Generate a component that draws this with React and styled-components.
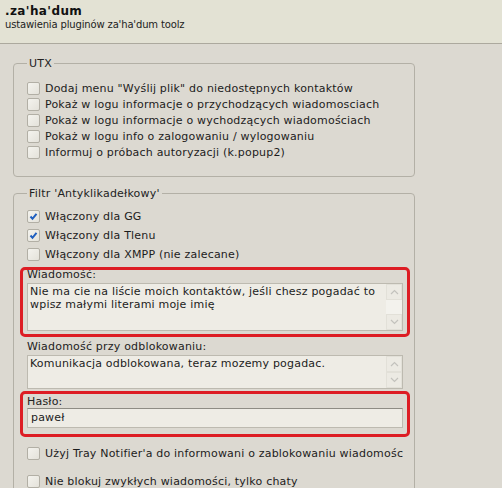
import React from "react";
import styled, { createGlobalStyle } from "styled-components";

const Global = createGlobalStyle`
  html, body { margin: 0; padding: 0; overflow: hidden; }
  body {
    background: #dcd9d1;
    font-family: "DejaVu Sans", Verdana, sans-serif;
    font-size: 11px;
    letter-spacing: 0.2px;
    color: #1c1c1c;
  }
`;

const Page = styled.div`
  width: 502px;
  height: 488px;
  overflow: hidden;
  background: #dcd9d1;
`;

const Header = styled.header`
  height: 38px;
  padding: 5px 5px 0;
  background: #e3e2d4;
  border-bottom: 1px solid #aca99e;
`;

const Title = styled.div`
  font-weight: bold;
  font-size: 12px;
  letter-spacing: 0.4px;
  line-height: 13px;
  color: #111;
`;

const Subtitle = styled.div`
  font-size: 10px;
  letter-spacing: -0.15px;
  line-height: 13px;
  color: #222;
`;

const Content = styled.main`
  padding: 13px 87px 0 13px;
`;

const Group = styled.fieldset`
  margin: ${(p) => (p.$first ? "0" : "10px 0 0")};
  padding: ${(p) => p.$pad};
  border: 1px solid #b3b0a6;
  border-radius: 4px;
  min-width: 0;
`;

const Legend = styled.legend`
  padding: 0 2px;
  line-height: 13px;
  color: #222;
`;

const CheckRow = styled.label`
  display: flex;
  align-items: center;
  gap: 5px;
  height: ${(p) => p.$h}px;
  margin-top: ${(p) => p.$mt || 0}px;
  white-space: nowrap;
  overflow: hidden;
`;

const Box = styled.span`
  flex: none;
  width: 11px;
  height: 11px;
  border: 1px solid #b2afa5;
  border-radius: 2px;
  background: linear-gradient(135deg, #f4f3ee 0%, #e4e2da 100%);
  display: flex;
  align-items: center;
  justify-content: center;
`;

const Field = styled.div`
  position: relative;
  margin-top: ${(p) => p.$mt}px;
  ${(p) =>
    p.$marked &&
    `
    &::after {
      content: "";
      position: absolute;
      left: -7px;
      right: -7px;
      top: ${p.$ot}px;
      bottom: ${p.$ob}px;
      border: 3px solid #dd1d24;
      border-radius: 5px;
      pointer-events: none;
    }
  `}
`;

const FieldLabel = styled.div`
  line-height: ${(p) => p.$lh}px;
  margin-top: ${(p) => p.$mt || 0}px;
  color: #222;
`;

const TextBox = styled.div`
  display: flex;
  height: ${(p) => p.$h}px;
  box-sizing: border-box;
  border: 1px solid #bdbab0;
  background: #eeece5;
  margin-top: 1px;
`;

const TextBody = styled.div`
  flex: 1;
  padding: 1px 2px;
  line-height: 13px;
  overflow: hidden;
  white-space: nowrap;
`;

const Scroll = styled.div`
  flex: none;
  width: 16px;
  display: flex;
  flex-direction: column;
  justify-content: space-between;
  background: #f3f2ed;
`;

const ScrollBtn = styled.div`
  height: 16px;
  box-sizing: border-box;
  border: 1px solid #e2e0d8;
  background: #eceae3;
  display: flex;
  align-items: center;
  justify-content: center;
`;

const Input = styled.div`
  height: 20px;
  box-sizing: border-box;
  border: 1px solid #bdbab0;
  border-top-color: #8e8c84;
  background: #eeece5;
  padding: 0 3px;
  line-height: 18px;
`;

const Check = () => (
  <svg width="9" height="9" viewBox="0 0 9 9">
    <polyline points="1.5,4.5 3.5,6.8 7.5,1.8" fill="none" stroke="#1f5fbf" strokeWidth="2" />
  </svg>
);

const Chevron = ({ up }) => (
  <svg width="9" height="6" viewBox="0 0 9 6">
    <polyline
      points={up ? "1,5 4.5,1.5 8,5" : "1,1 4.5,4.5 8,1"}
      fill="none"
      stroke="#c3c2bd"
      strokeWidth="1.2"
    />
  </svg>
);

const Checkbox = ({ checked, children, h, mt }) => (
  <CheckRow $h={h} $mt={mt}>
    <Box>{checked && <Check />}</Box>
    {children}
  </CheckRow>
);

const ScrollBar = () => (
  <Scroll>
    <ScrollBtn>
      <Chevron up />
    </ScrollBtn>
    <ScrollBtn>
      <Chevron />
    </ScrollBtn>
  </Scroll>
);

const utx = [
  'Dodaj menu "Wyślij plik" do niedostępnych kontaktów',
  "Pokaż w logu informacje o przychodzących wiadomosciach",
  "Pokaż w logu informacje o wychodzących wiadomościach",
  "Pokaż w logu info o zalogowaniu / wylogowaniu",
  "Informuj o próbach autoryzacji (k.popup2)",
];

const filtr = [
  { t: "Włączony dla GG", c: true },
  { t: "Włączony dla Tlenu", c: true },
  { t: "Włączony dla XMPP (nie zalecane)", c: false },
];

export default function App() {
  return (
    <Page>
      <Global />
      <Header>
        <Title>.za'ha'dum</Title>
        <Subtitle>ustawienia pluginów za'ha'dum toolz</Subtitle>
      </Header>
      <Content>
        <Group $first $pad="10px 11px 16px 13px">
          <Legend>UTX</Legend>
          {utx.map((t) => (
            <Checkbox key={t} h={16}>
              {t}
            </Checkbox>
          ))}
        </Group>
        <Group $pad="7px 11px 40px 13px">
          <Legend>Filtr 'Antyklikadełkowy'</Legend>
          {filtr.map((f) => (
            <Checkbox key={f.t} h={19} checked={f.c}>
              {f.t}
            </Checkbox>
          ))}
          <Field $mt={0} $marked $ot={-1} $ob={-6}>
            <FieldLabel $lh={14} $mt={4}>Wiadomość:</FieldLabel>
            <TextBox $h={48}>
              <TextBody>
                Nie ma cie na liście moich kontaktów, jeśli chesz pogadać to
                <br />
                wpisz małymi literami moje imię
              </TextBody>
              <ScrollBar />
            </TextBox>
          </Field>
          <Field $mt={9}>
            <FieldLabel $lh={14}>Wiadomość przy odblokowaniu:</FieldLabel>
            <TextBox $h={34}>
              <TextBody>Komunikacja odblokowana, teraz mozemy pogadac.</TextBody>
              <ScrollBar />
            </TextBox>
          </Field>
          <Field $mt={6} $marked $ot={-4} $ob={-9}>
            <FieldLabel $lh={13}>Hasło:</FieldLabel>
            <Input>paweł</Input>
          </Field>
          <Checkbox h={18} mt={16}>
            Użyj Tray Notifier'a do informowani o zablokowaniu wiadomości
          </Checkbox>
          <Checkbox h={18} mt={10}>
            Nie blokuj zwykłych wiadomości, tylko chaty
          </Checkbox>
        </Group>
      </Content>
    </Page>
  );
}
